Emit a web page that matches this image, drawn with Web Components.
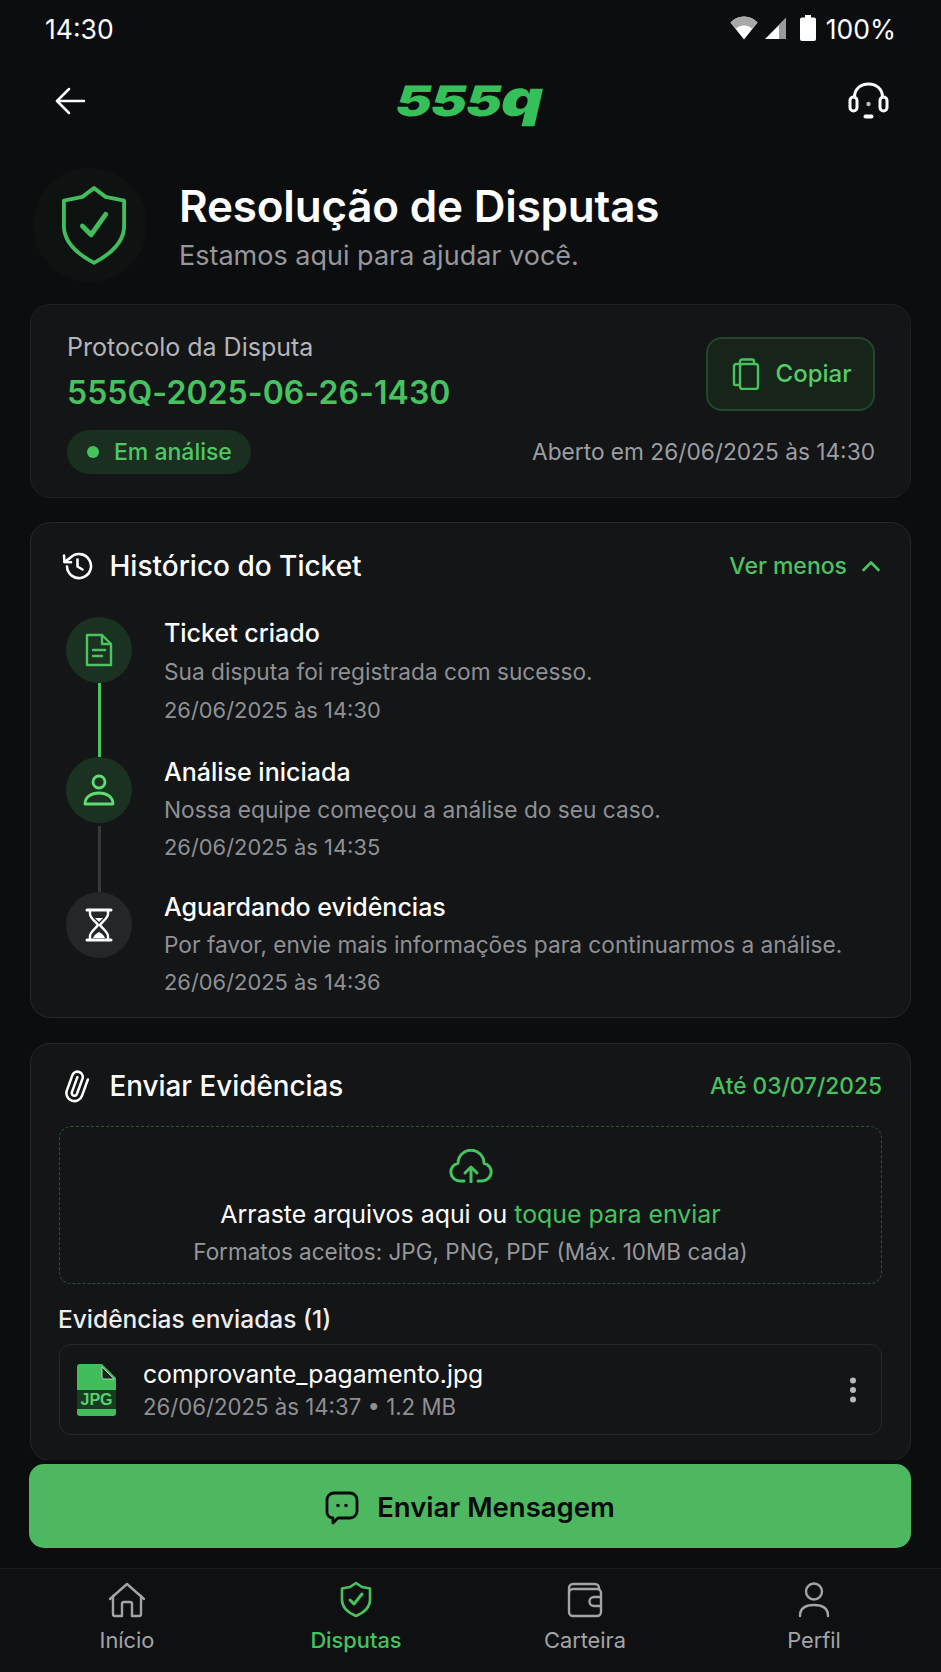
<!DOCTYPE html>
<html lang="pt-BR">
<head>
<meta charset="utf-8">
<title>Resolução de Disputas</title>
<style>
  html, body { margin: 0; padding: 0; background: #0b0d0f; }
  body { font-family: Inter, "Noto Sans", sans-serif; color: #fff; }
  app-shell { height: 1672px; }
</style>
</head>
<body>
<app-shell>
  <status-bar></status-bar>
  <app-header></app-header>
  <page-title></page-title>
  <protocol-card></protocol-card>

  <section-card>
    <svg slot="icon" width="32" height="32" viewBox="0 0 32 32" fill="none" stroke="#fff" stroke-width="2.600" stroke-linecap="round" stroke-linejoin="round"><path d="M6 16.500a12 12 0 1 0 3.200-8.600L3.500 12"/><path d="M3 5.500 3.500 12l6.500.3"/><path d="M16.500 9.500v7l5 3"/></svg>
    <span slot="title">Histórico do Ticket</span>
    <span slot="aside" class="more">Ver menos <svg width="20" height="12" viewBox="0 0 20 12" fill="none" stroke="#4cc35f" stroke-width="2.600" stroke-linecap="round" stroke-linejoin="round"><path d="M2.500 10 10 2.500 17.500 10"/></svg></span>
    <ticket-timeline>
      <timeline-item tone="green" line="green" heading="Ticket criado" text="Sua disputa foi registrada com sucesso." date="26/06/2025 às 14:30">
        <svg width="30" height="34" viewBox="0 0 30 34" fill="none" stroke="#4cc35f" stroke-width="2.400" stroke-linejoin="round" stroke-linecap="round"><path d="M3 2h15l9 9v21H3z"/><path d="M18 2v9h9"/><path d="M9 17h12M9 23h9"/></svg>
      </timeline-item>
      <timeline-item tone="green" line="gray" heading="Análise iniciada" text="Nossa equipe começou a análise do seu caso." date="26/06/2025 às 14:35" tight>
        <svg width="32" height="34" viewBox="0 0 32 34" fill="none" stroke="#5fdc74" stroke-width="2.800" stroke-linejoin="round"><circle cx="16" cy="9" r="6"/><path d="M2 31c0-7 6-11 14-11s14 4 14 11z"/></svg>
      </timeline-item>
      <timeline-item tone="gray" heading="Aguardando evidências" text="Por favor, envie mais informações para continuarmos a análise." date="26/06/2025 às 14:36" tight>
        <svg width="28" height="34" viewBox="0 0 28 34" fill="none" stroke="#fff" stroke-width="2.400" stroke-linejoin="round" stroke-linecap="round"><path d="M2 2h24M2 32h24" stroke-width="3"/><path d="M5 2v4c0 4 6 8 8 11-2 3-8 7-8 11v4M23 2v4c0 4-6 8-8 11 2 3 8 7 8 11v4"/><path d="M8 30c1-3 4-5 6-6 2 1 5 3 6 6z" fill="#fff" stroke="none"/><path d="M10 10h8l-4 4z" fill="#fff" stroke="none"/></svg>
      </timeline-item>
    </ticket-timeline>
  </section-card>

  <section-card class="last">
    <svg slot="icon" width="32" height="34" viewBox="0 0 24 24" fill="none" stroke="#fff" stroke-width="1.900" stroke-linecap="round" stroke-linejoin="round"><g transform="rotate(-25 12 12)"><path d="m21.440 11.050-9.190 9.190a6 6 0 0 1-8.490-8.490l8.570-8.570A4 4 0 1 1 18 8.840l-8.590 8.570a2 2 0 0 1-2.830-2.830l8.490-8.480"/></g></svg>
    <span slot="title">Enviar Evidências</span>
    <span slot="aside" class="deadline">Até 03/07/2025</span>
    <upload-box></upload-box>
    <div class="sent">Evidências enviadas (1)</div>
    <file-row name="comprovante_pagamento.jpg" meta="26/06/2025 às 14:37 • 1.2 MB"></file-row>
  </section-card>

  <action-button slot="footer">Enviar Mensagem</action-button>
  <bottom-nav slot="footer"></bottom-nav>
</app-shell>

<script>
// small helper, every element gets its own open shadow root
function shadow(el, html) {
  el.attachShadow({mode: 'open'}).innerHTML = html;
}

class AppShell extends HTMLElement {
  connectedCallback() {
    shadow(this, `
      <style>
        :host { display: flex; flex-direction: column; overflow: hidden; background: #0b0d0f; }
        .scroll { flex: 1; min-height: 0; overflow: hidden; padding: 0 30px; display: flex; flex-direction: column; gap: 24px; }
        .top { flex: none; }
        .foot { flex: none; }
      </style>
      <div class="top"><slot name="top"></slot></div>
      <div class="scroll"><slot></slot></div>
      <div class="foot"><slot name="footer"></slot></div>
    `);
    this.querySelector('status-bar').slot = 'top';
    this.querySelector('app-header').slot = 'top';
  }
}

class StatusBar extends HTMLElement {
  connectedCallback() {
    shadow(this, `
      <style>
        :host { display: flex; align-items: center; justify-content: space-between; box-sizing: border-box; height: 56px; padding: 2px 45px 0 45px; font: 400 26.500px/1 Inter, sans-serif; color: #fff; }
        .right { display: flex; align-items: center; gap: 6px; }
        .icons { display: flex; align-items: center; gap: 6px; margin-right: 4px; margin-top: -2px; }
        svg { display: block; }
      </style>
      <span>14:30</span>
      <div class="right">
        <div class="icons">
          <svg width="28" height="24" viewBox="0 0 28 24"><path d="M0.500 6.500C4 2.500 9 .5 14 .5s10 2 13.500 6L14 23.500z" fill="#fff"/><path d="M.5 6.500C4 2.500 9 .5 14 .5s10 2 13.500 6l-5.200 6.500C20 10.500 17 9.500 14 9.500s-6 1-8.300 3.500z" fill="#a9a9a9"/></svg>
          <svg width="23" height="23" viewBox="0 0 23 23"><path d="M22 1v21H1z" fill="#fff"/><path d="M22 1v21h-7V8z" fill="#9a9a9a"/></svg>
          <svg width="16" height="26" viewBox="0 0 16 26" style="margin-left:7px"><path d="M5 0h6v2.500h3a2 2 0 0 1 2 2V24a2 2 0 0 1-2 2H2a2 2 0 0 1-2-2V4.500a2 2 0 0 1 2-2h3z" fill="#fff"/></svg>
        </div>
        <span>100%</span>
      </div>
    `);
  }
}

class AppHeader extends HTMLElement {
  connectedCallback() {
    shadow(this, `
      <style>
        :host { display: flex; align-items: center; justify-content: space-between; height: 90px; padding: 0 52px 0 55px; box-sizing: border-box; }
        svg { display: block; }
        .logo { font: 900 42px/1 Inter, sans-serif; color: #35c05a; letter-spacing: -1px; transform: scaleX(1.3) skewX(-10deg); transform-origin: center; margin-left: 5px; white-space: nowrap; }
        .logo span { font-size: 50px; line-height: 0; }
      </style>
      <svg width="31" height="28" viewBox="0 0 31 28" fill="none" stroke="#fff" stroke-width="2.500" stroke-linecap="round" stroke-linejoin="round"><path d="M29 14H2"/><path d="M14 2 2 14l12 12"/></svg>
      <div class="logo">555<span>q</span></div>
      <svg width="41" height="38" viewBox="0 0 41 38" fill="none" stroke="#fff" stroke-width="3" stroke-linecap="round"><path d="M6.500 15C6.500 7 12.500 2 20.500 2s14 5 14 13"/><rect x="2" y="15" width="7" height="14" rx="3.500"/><rect x="32" y="15" width="7" height="14" rx="3.500"/><circle cx="20.500" cy="22" r="2.200" fill="#bbb" stroke="none"/><path d="M17.500 34.500h6" stroke-width="4"/></svg>
    `);
  }
}

class PageTitle extends HTMLElement {
  connectedCallback() {
    shadow(this, `
      <style>
        :host { display: flex; align-items: center; gap: 32px; height: 114px; margin: 22px 0 -2px 3px; flex: none; }
        .badge { box-sizing: border-box; width: 114px; height: 114px; padding-left: 7px; border-radius: 50%; background: #0e1211; display: flex; align-items: center; justify-content: center; flex: none; }
        h1 { margin: 0; font: 600 44px/54px Inter, sans-serif; color: #fff; letter-spacing: -.2px; }
        p { margin: 7px 0 0; font: 400 27px/32px Inter, sans-serif; color: #96979b; }
        svg { display: block; }
      </style>
      <div class="badge">
        <svg width="68" height="82" viewBox="0 0 70 82" fill="none" stroke="#41bd5c" stroke-width="4" stroke-linejoin="round" stroke-linecap="round"><path d="M35 3 47 12 66 16V42C66 60 50 72 35 80 20 72 4 60 4 42V16L23 12z"/><path d="M23 42 32 51 47 30" stroke-width="5"/></svg>
      </div>
      <div><h1>Resolução de Disputas</h1><p>Estamos aqui para ajudar você.</p></div>
    `);
  }
}

class ProtocolCard extends HTMLElement {
  connectedCallback() {
    shadow(this, `
      <style>
        :host { display: block; flex: none; box-sizing: border-box; height: 194px; background: #131517; border: 1px solid #1f2225; border-radius: 20px; padding: 27px 36px 0; color: #fff; }
        .row { display: flex; justify-content: space-between; align-items: center; }
        .top { align-items: flex-start; }
        .label { font: 400 25px/30px Inter, sans-serif; color: #b5b6b9; }
        .code { font: 600 32px/38px Inter, sans-serif; color: #46c25f; margin-top: 12px; letter-spacing: .05px; }
        button { all: unset; box-sizing: border-box; width: 169px; height: 74px; margin: 5px -1px 0 0; padding-left: 2px; border: 2px solid #26452e; border-radius: 16px; background: #16241a; display: flex; align-items: center; justify-content: center; gap: 16px; font: 500 24px/1 Inter, sans-serif; color: #54cc68; }
        .bottom { margin-top: 18px; }
        .pill { display: inline-flex; align-items: center; gap: 15px; height: 44px; padding: 0 19px 0 20px; border-radius: 22px; background: #1a2f20; font: 500 23px/1 Inter, sans-serif; color: #4fc765; }
        .dot { width: 12px; height: 12px; border-radius: 50%; background: #46c25f; }
        .opened { font: 400 22.700px/1 Inter, sans-serif; color: #9d9ea2; margin-right: -1px; }
        svg { display: block; }
      </style>
      <div class="row top">
        <div><div class="label">Protocolo da Disputa</div><div class="code">555Q-2025-06-26-1430</div></div>
        <button>
          <svg width="28" height="32" viewBox="0 0 28 32" fill="none" stroke="#46c25f" stroke-width="2.400" stroke-linejoin="round"><rect x="8" y="6" width="18" height="25" rx="2.500"/><path d="M8 27H3.500A1.500 1.500 0 0 1 2 25.500V8.500C2 7 3 6 4.500 6H8"/><path d="M8 6V3.500A2 2 0 0 1 10 1.500h10A2 2 0 0 1 22 3.500V6"/></svg>
          Copiar
        </button>
      </div>
      <div class="row bottom">
        <span class="pill"><span class="dot"></span>Em análise</span>
        <span class="opened">Aberto em 26/06/2025 às 14:30</span>
      </div>
    `);
  }
}

class SectionCard extends HTMLElement {
  connectedCallback() {
    shadow(this, `
      <style>
        :host { display: block; flex: none; box-sizing: border-box; background: #131517; border: 1px solid #25282b; border-radius: 20px; padding: 25px 28px 0; color: #fff; }
        :host(.last) { height: 418px; margin-top: 1px; padding-top: 24px; }
        header { display: flex; align-items: center; height: 36px; gap: 17px; padding-left: 1.500px; }
        h2 { margin: 0; flex: 1; font: 500 28px/36px Inter, sans-serif; color: #fff; }
        :host(.last) h2 { font-size: 27.800px; }
        ::slotted(.more) { display: inline-flex; align-items: center; gap: 14px; font: 500 23px/1 Inter, sans-serif; color: #4cc35f; margin-right: 1px; }
        ::slotted(.deadline) { font: 500 22.700px/1 Inter, sans-serif; color: #46c25f; }
        ::slotted(.sent) { font: 500 24.500px/30px Inter, sans-serif; color: #eee; margin-top: 20px; margin-left: -1px; }
      </style>
      <header><slot name="icon"></slot><h2><slot name="title"></slot></h2><slot name="aside"></slot></header>
      <slot></slot>
    `);
  }
}

class TicketTimeline extends HTMLElement {
  connectedCallback() {
    shadow(this, `
      <style>:host { display: block; margin-top: 33px; padding-left: 8px; padding-bottom: 16px; margin-left: -1px; }</style>
      <slot></slot>
    `);
  }
}

class TimelineItem extends HTMLElement {
  connectedCallback() {
    const tone = this.getAttribute('tone');
    const line = this.getAttribute('line');
    const tight = this.hasAttribute('tight');
    shadow(this, `
      <style>
        :host { display: flex; gap: 32px; height: ${line ? (tight ? '135px' : '140px') : 'auto'}; }
        .rail { width: 66px; flex: none; display: flex; flex-direction: column; align-items: center; }
        .circle { width: 66px; height: 66px; border-radius: 50%; flex: none; display: flex; align-items: center; justify-content: center; background: ${tone === 'green' ? '#1b3122' : '#242628'}; }
        .line { flex: 1; width: 3px; background: ${line === 'green' ? '#4cc35f' : '#37393b'}; margin-top: ${line === 'gray' ? 3 : 0}px; }
        .body { display: flex; flex-direction: column; margin-top: ${tight ? -1 : 0}px; }
        h3 { margin: 0; font: 450 25px/32px Inter, sans-serif; color: #fff; }
        p { margin: 0; font: 400 22.700px/38px Inter, sans-serif; color: #8f9094; white-space: nowrap; }
        .txt { margin-top: ${tight ? 3 : 4}px; }
        .date { font-size: 21.900px; line-height: ${tight ? 37 : 38}px; }
        ::slotted(svg) { display: block; }
      </style>
      <div class="rail"><div class="circle"><slot></slot></div>${line ? '<div class="line"></div>' : ''}</div>
      <div class="body">
        <h3>${this.getAttribute('heading')}</h3>
        <p class="txt">${this.getAttribute('text')}</p>
        <p class="date">${this.getAttribute('date')}</p>
      </div>
    `);
  }
}

class UploadBox extends HTMLElement {
  connectedCallback() {
    shadow(this, `
      <style>
        :host { display: flex; flex-direction: column; align-items: center; box-sizing: border-box; height: 158px; margin-top: 22px; border: 1px dashed #2c5535; border-radius: 12px; padding-top: 22px; }
        .main { margin-top: 15px; font: 400 24.900px/32px Inter, sans-serif; color: #fff; }
        .main span { color: #46c25f; }
        .hint { margin-top: 7px; font: 400 22.500px/30px Inter, sans-serif; color: #96979b; }
        svg { display: block; }
      </style>
      <svg width="44" height="34" viewBox="0 0 44 34" fill="none" stroke="#46c25f" stroke-width="3" stroke-linecap="round" stroke-linejoin="round"><path d="M15 32H11a9 9 0 0 1-2-17.800 13 13 0 0 1 26 0 9 9 0 0 1-2 17.800h-4"/><path d="M22 33V19"/><path d="M16 24l6-6 6 6"/></svg>
      <div class="main">Arraste arquivos aqui ou <span>toque para enviar</span></div>
      <div class="hint">Formatos aceitos: JPG, PNG, PDF (Máx. 10MB cada)</div>
    `);
  }
}

class FileRow extends HTMLElement {
  connectedCallback() {
    shadow(this, `
      <style>
        :host { display: flex; align-items: center; box-sizing: border-box; height: 91px; margin-top: 10px; border: 1px solid #26292c; border-radius: 12px; padding: 0 24px 0 17px; gap: 27px; }
        .ficon { position: relative; flex: none; width: 39px; height: 52px; }
        .ficon b { position: absolute; left: 0; right: 0; top: 26px; text-align: center; font: 700 16px/19px "Liberation Sans", sans-serif; color: #58d36e; }
        .info { flex: 1; }
        .name { font: 400 24.700px/32px Inter, sans-serif; color: #fff; }
        .meta { margin-top: 2px; font: 400 22.200px/30px Inter, sans-serif; color: #8f9094; }
        svg { display: block; }
      </style>
      <div class="ficon">
        <svg width="39" height="52" viewBox="0 0 39 52"><path d="M3 0H25L39 14V49a3 3 0 0 1-3 3H3a3 3 0 0 1-3-3V3a3 3 0 0 1 3-3z" fill="#43bd5c"/><path d="M25 3 37 15H27a2 2 0 0 1-2-2z" fill="#1a2620" stroke="#cfe9d5" stroke-width=".8"/><rect y="26" width="39" height="19" fill="#173c22"/></svg>
        <b>JPG</b>
      </div>
      <div class="info"><div class="name">${this.getAttribute('name')}</div><div class="meta">${this.getAttribute('meta')}</div></div>
      <svg width="8" height="26" viewBox="0 0 8 26" fill="#b9babc"><circle cx="4" cy="3.500" r="3"/><circle cx="4" cy="13" r="3"/><circle cx="4" cy="22.500" r="3"/></svg>
    `);
  }
}

class ActionButton extends HTMLElement {
  connectedCallback() {
    shadow(this, `
      <style>
        :host { display: block; padding: 4px 30px 0 29px; }
        button { all: unset; box-sizing: border-box; width: 100%; height: 84px; padding-top: 3px; border-radius: 15px; background: #4db85f; display: flex; align-items: center; justify-content: center; gap: 18px; font: 600 27.500px/1 Inter, sans-serif; color: #07090a; }
        svg { display: block; }
      </style>
      <button>
        <svg width="34" height="34" viewBox="0 0 34 34" fill="none" stroke="#07090a" stroke-width="2.800" stroke-linejoin="round"><path d="M9 2h16a7 7 0 0 1 7 7v11a7 7 0 0 1-7 7H13l-5 5 0-5a6 6 0 0 1-6-7V9a7 7 0 0 1 7-7z"/><circle cx="13" cy="14.500" r="1.800" fill="#07090a" stroke="none"/><circle cx="21" cy="14.500" r="1.800" fill="#07090a" stroke="none"/></svg>
        <slot></slot>
      </button>
    `);
  }
}

const NAV_ICONS = {
  home: '<svg width="38" height="36" viewBox="0 0 38 36" fill="none" stroke="#a3a4a8" stroke-width="2.400" stroke-linejoin="round" stroke-linecap="round"><path d="M2 17 19 2l17 15"/><path d="M5 14V32a2 2 0 0 0 2 2h7V22a2 2 0 0 1 2-2h6a2 2 0 0 1 2 2v12h7a2 2 0 0 0 2-2V14"/></svg>',
  shield: '<svg width="32" height="37" viewBox="0 0 32 37" fill="none" stroke="#46c25f" stroke-width="2.600" stroke-linejoin="round" stroke-linecap="round"><path d="M16 2 22 6 30 7.500V19C30 27 23 32 16 35 9 32 2 27 2 19V7.500L10 6z"/><path d="M10 19l4 4 8-10" stroke-width="3"/></svg>',
  wallet: '<svg width="36" height="36" viewBox="0 0 36 36" fill="none" stroke="#a3a4a8" stroke-width="2.400" stroke-linejoin="round"><path d="M2 11V6a4 4 0 0 1 4-4h22a4 4 0 0 1 4 4v2"/><rect x="2" y="7" width="32" height="27" rx="4"/><path d="M34 15h-7a4.500 4.500 0 0 0 0 9h7"/></svg>',
  user: '<svg width="32" height="36" viewBox="0 0 32 36" fill="none" stroke="#a3a4a8" stroke-width="2.400" stroke-linecap="round"><ellipse cx="16" cy="9.500" rx="8" ry="8"/><path d="M2 34c0-7 5-11 14-11s14 4 14 11"/></svg>'
};

class BottomNav extends HTMLElement {
  connectedCallback() {
    shadow(this, `
      <style>
        :host { display: grid; grid-template-columns: repeat(4, 229px); height: 104px; margin-top: 20px; border-top: 1px solid #1a1c1e; background: #0e1012; box-sizing: border-box; padding: 12px 0 0 12.500px; }
      </style>
      <nav-item icon="home" label="Início"></nav-item>
      <nav-item icon="shield" label="Disputas" active></nav-item>
      <nav-item icon="wallet" label="Carteira"></nav-item>
      <nav-item icon="user" label="Perfil"></nav-item>
    `);
  }
}

class NavItem extends HTMLElement {
  connectedCallback() {
    const active = this.hasAttribute('active');
    shadow(this, `
      <style>
        :host { display: flex; flex-direction: column; align-items: center; gap: 8px; font: ${active ? 500 : 400} 21.800px/28px Inter, sans-serif; color: ${active ? '#46c25f' : '#a3a4a8'}; white-space: nowrap; }
        .i { height: 37px; display: flex; align-items: center; }
        svg { display: block; }
      </style>
      <div class="i">${NAV_ICONS[this.getAttribute('icon')]}</div>
      <span>${this.getAttribute('label')}</span>
    `);
  }
}

customElements.define('app-shell', AppShell);
customElements.define('status-bar', StatusBar);
customElements.define('app-header', AppHeader);
customElements.define('page-title', PageTitle);
customElements.define('protocol-card', ProtocolCard);
customElements.define('section-card', SectionCard);
customElements.define('ticket-timeline', TicketTimeline);
customElements.define('timeline-item', TimelineItem);
customElements.define('upload-box', UploadBox);
customElements.define('file-row', FileRow);
customElements.define('action-button', ActionButton);
customElements.define('bottom-nav', BottomNav);
customElements.define('nav-item', NavItem);
</script>
</body>
</html>
